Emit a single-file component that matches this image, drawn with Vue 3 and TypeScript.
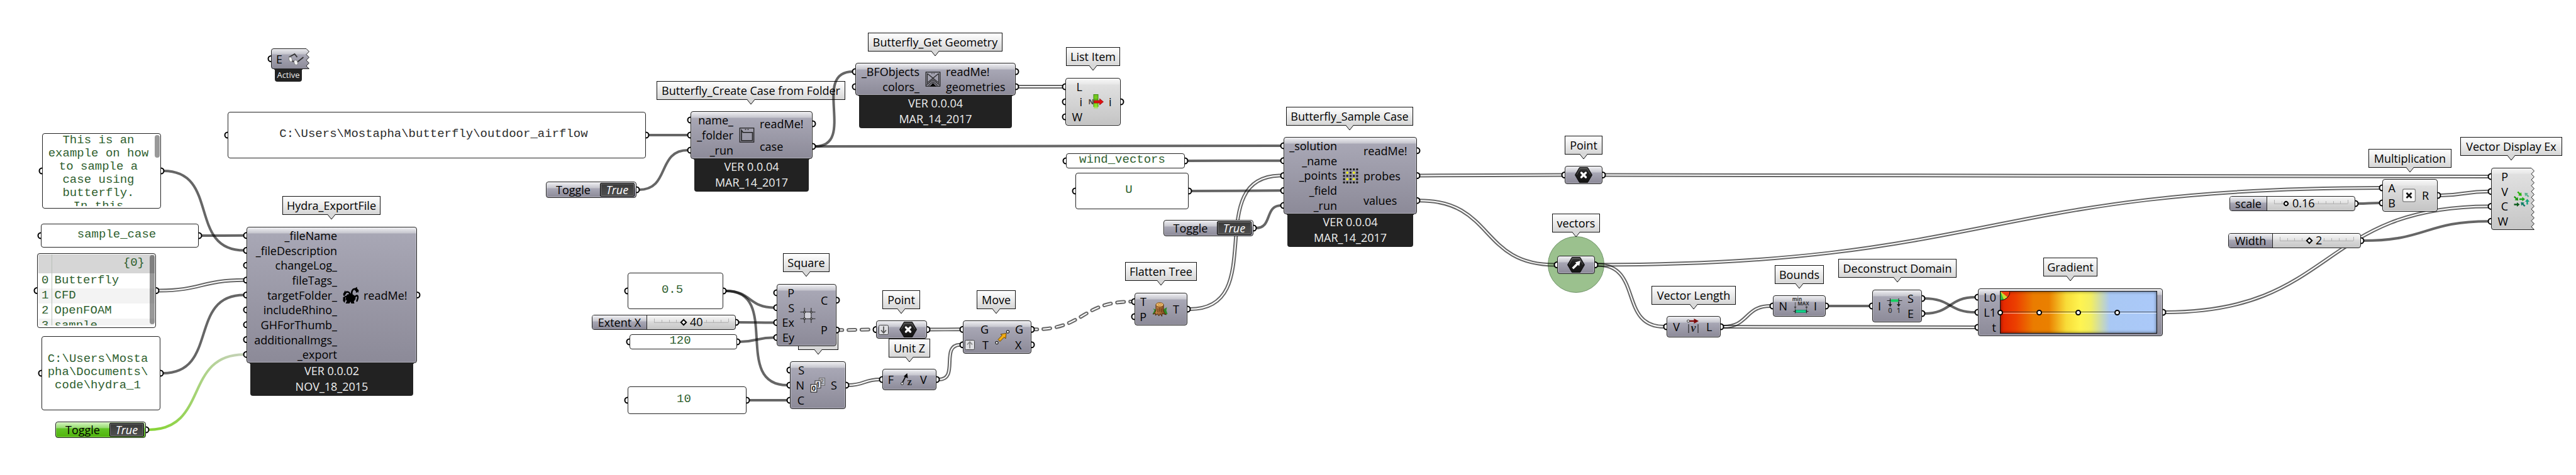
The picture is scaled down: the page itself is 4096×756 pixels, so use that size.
<script setup lang="ts">
import { computed, reactive } from 'vue'

interface Port { text: string; badge?: 'up' | 'down' }
interface Box { id: string; x: number; y: number; w: number; h: number }
interface Component extends Box {
  tone: 'grey' | 'light'
  ins: Port[]
  outs: Port[]
  inW: number
  icon: string
  wide?: boolean
  badge?: 'up' | 'down'
  tag?: string[]
  smallTag?: boolean
  jagged?: boolean
}
interface Panel extends Box { text: string; dark?: boolean; top?: boolean }
interface Toggle extends Box { on: boolean; green?: boolean }
interface Slider extends Box {
  name: string; nameW: number
  min: number; max: number; step: number; value: number; round?: boolean
}
interface Callout { text: string; cx: number; y: number; w: number }
type WireKind = 'item' | 'list' | 'tree' | 'picked'
interface Wire { from: string; out: number; to: string; inp: number; kind: WireKind }

const ports = (...names: string[]): Port[] => names.map((text) => ({ text }))

const components: Component[] = [
  { id: 'hydra', x: 392, y: 361, w: 271, h: 217, tone: 'grey', inW: 144, icon: 'hydra', tag: ['VER 0.0.02', 'NOV_18_2015'],
    ins: ports('_fileName', '_fileDescription', 'changeLog_', 'fileTags_', 'targetFolder_', 'includeRhino_', 'GHForThumb_', 'additionalImgs_', '_export'),
    outs: ports('readMe!') },
  { id: 'glasses', x: 431, y: 77, w: 61, h: 33, tone: 'grey', inW: 18, icon: 'glasses', jagged: true, ins: ports('E'), outs: [], tag: ['Active'], smallTag: true },
  { id: 'create', x: 1098, y: 177, w: 194, h: 76, tone: 'grey', inW: 68, icon: 'folder', tag: ['VER 0.0.04', 'MAR_14_2017'],
    ins: ports('name_', '_folder', '_run'), outs: ports('readMe!', 'case') },
  { id: 'getgeo', x: 1360, y: 100, w: 255, h: 52, tone: 'grey', inW: 102, icon: 'geometry', tag: ['VER 0.0.04', 'MAR_14_2017'],
    ins: ports('_BFObjects', 'colors_'), outs: ports('readMe!', 'geometries') },
  { id: 'listitem', x: 1694, y: 124, w: 88, h: 76, tone: 'light', inW: 27, icon: 'listitem', ins: ports('L', 'i', 'W'), outs: ports('i') },
  { id: 'sample', x: 2041, y: 218, w: 212, h: 123, tone: 'grey', inW: 85, icon: 'probes', tag: ['VER 0.0.04', 'MAR_14_2017'],
    ins: ports('_solution', '_name', '_points', '_field', '_run'), outs: ports('readMe!', 'probes', 'values') },
  { id: 'square', x: 1235, y: 452, w: 95, h: 99, tone: 'grey', inW: 28, icon: 'square', ins: ports('P', 'S', 'Ex', 'Ey'), outs: ports('C', 'P') },
  { id: 'series', x: 1256, y: 575, w: 89, h: 76, tone: 'grey', inW: 23, icon: 'series', ins: ports('S', 'N', 'C'), outs: ports('S') },
  { id: 'point1', x: 1393, y: 510, w: 81, h: 29, tone: 'grey', inW: 0, icon: 'point', wide: true, badge: 'down', ins: ports(''), outs: ports('') },
  { id: 'unitz', x: 1403, y: 587, w: 86, h: 34, tone: 'grey', inW: 18, icon: 'unitz', ins: ports('F'), outs: ports('V') },
  { id: 'move', x: 1531, y: 510, w: 109, h: 53, tone: 'grey', inW: 41, icon: 'move', ins: [{ text: 'G' }, { text: 'T', badge: 'up' }], outs: ports('G', 'X') },
  { id: 'flatten', x: 1804, y: 466, w: 84, h: 52, tone: 'grey', inW: 19, icon: 'stump', ins: ports('T', 'P'), outs: ports('T') },
  { id: 'point2', x: 2488, y: 264, w: 60, h: 29, tone: 'grey', inW: 0, icon: 'point', wide: true, ins: ports(''), outs: ports('') },
  { id: 'vectors', x: 2476, y: 407, w: 60, h: 29, tone: 'grey', inW: 0, icon: 'vector', wide: true, ins: ports(''), outs: ports('') },
  { id: 'vlen', x: 2650, y: 503, w: 86, h: 34, tone: 'grey', inW: 21, icon: 'vlen', ins: ports('V'), outs: ports('L') },
  { id: 'bounds', x: 2819, y: 470, w: 84, h: 34, tone: 'grey', inW: 23, icon: 'bounds', ins: ports('N'), outs: ports('I') },
  { id: 'decon', x: 2977, y: 461, w: 79, h: 52, tone: 'grey', inW: 14, icon: 'decon', ins: ports('I'), outs: ports('S', 'E') },
  { id: 'gradient', x: 3145, y: 459, w: 294, h: 76, tone: 'grey', inW: 29, icon: '', ins: ports('L0', 'L1', 't'), outs: ports('') },
  { id: 'mult', x: 3788, y: 285, w: 88, h: 52, tone: 'light', inW: 21, icon: 'times', ins: ports('A', 'B'), outs: ports('R') },
  { id: 'display', x: 3961, y: 267, w: 69, h: 99, tone: 'light', inW: 27, icon: 'display', jagged: true, ins: ports('P', 'V', 'C', 'W'), outs: [] },
]

const panels: Panel[] = [
  { id: 'about', x: 67, y: 212, w: 189, h: 120, top: true, text: 'This is an\nexample on how\nto sample a\ncase using\nbutterfly.\nIn this' },
  { id: 'casename', x: 65, y: 356, w: 251, h: 38, text: 'sample_case' },
  { id: 'target', x: 66, y: 535, w: 189, h: 118, text: 'C:\\Users\\Mosta\npha\\Documents\\\ncode\\hydra_1' },
  { id: 'casepath', x: 362, y: 178, w: 665, h: 74, dark: true, text: 'C:\\Users\\Mostapha\\butterfly\\outdoor_airflow' },
  { id: 'wind', x: 1695, y: 244, w: 189, h: 24, text: 'wind_vectors' },
  { id: 'field', x: 1710, y: 275, w: 180, h: 58, text: 'U' },
  { id: 'half', x: 998, y: 434, w: 152, h: 58, text: '0.5' },
  { id: 'extenty', x: 1001, y: 532, w: 171, h: 24, text: '120' },
  { id: 'count', x: 998, y: 615, w: 189, h: 44, text: '10' },
]

const tagList: Box = { id: 'tags', x: 59, y: 403, w: 189, h: 119 }
const tagRows = ['Butterfly', 'CFD', 'OpenFOAM', 'sample']

const toggles = reactive<Toggle[]>([
  { id: 'export', x: 88, y: 671, w: 144, h: 26, on: true, green: true },
  { id: 'runcreate', x: 868, y: 289, w: 144, h: 26, on: true },
  { id: 'runsample', x: 1850, y: 350, w: 143, h: 26, on: true },
])

const sliders = reactive<Slider[]>([
  { id: 'extentx', x: 941, y: 501, w: 229, h: 24, name: 'Extent X', nameW: 87, min: 0, max: 100, step: 1, value: 40 },
  { id: 'scale', x: 3545, y: 312, w: 200, h: 24, name: 'scale', nameW: 59, min: 0, max: 1, step: 0.01, value: 0.16, round: true },
  { id: 'width', x: 3543, y: 371, w: 211, h: 24, name: 'Width', nameW: 70, min: 0, max: 5, step: 1, value: 2 },
])

const callouts: Callout[] = [
  { text: 'Hydra_ExportFile', cx: 527, y: 312, w: 156 },
  { text: 'Butterfly_Create Case from Folder', cx: 1194, y: 129, w: 300 },
  { text: 'Butterfly_Get Geometry', cx: 1487, y: 52, w: 214 },
  { text: 'List Item', cx: 1738, y: 75, w: 86 },
  { text: 'Butterfly_Sample Case', cx: 2146, y: 170, w: 202 },
  { text: 'Square', cx: 1282, y: 403, w: 74 },
  { text: '', cx: 1301, y: 527, w: 64 },
  { text: 'Point', cx: 1433, y: 462, w: 60 },
  { text: 'Unit Z', cx: 1446, y: 539, w: 66 },
  { text: 'Move', cx: 1584, y: 462, w: 62 },
  { text: 'Flatten Tree', cx: 1846, y: 417, w: 114 },
  { text: 'Point', cx: 2518, y: 216, w: 60 },
  { text: 'vectors', cx: 2506, y: 340, w: 76 },
  { text: 'Vector Length', cx: 2693, y: 455, w: 134 },
  { text: 'Bounds', cx: 2861, y: 422, w: 78 },
  { text: 'Deconstruct Domain', cx: 3017, y: 412, w: 188 },
  { text: 'Gradient', cx: 3292, y: 410, w: 86 },
  { text: 'Multiplication', cx: 3832, y: 237, w: 132 },
  { text: 'Vector Display Ex', cx: 3993, y: 218, w: 162 },
]

const wires: Wire[] = [
  { from: 'about', out: 0, to: 'hydra', inp: 1, kind: 'item' },
  { from: 'casename', out: 0, to: 'hydra', inp: 0, kind: 'item' },
  { from: 'tags', out: 0, to: 'hydra', inp: 3, kind: 'list' },
  { from: 'target', out: 0, to: 'hydra', inp: 4, kind: 'item' },
  { from: 'export', out: 0, to: 'hydra', inp: 8, kind: 'picked' },
  { from: 'casepath', out: 0, to: 'create', inp: 1, kind: 'item' },
  { from: 'runcreate', out: 0, to: 'create', inp: 2, kind: 'item' },
  { from: 'create', out: 1, to: 'getgeo', inp: 0, kind: 'item' },
  { from: 'create', out: 1, to: 'sample', inp: 0, kind: 'item' },
  { from: 'getgeo', out: 1, to: 'listitem', inp: 0, kind: 'list' },
  { from: 'wind', out: 0, to: 'sample', inp: 1, kind: 'item' },
  { from: 'field', out: 0, to: 'sample', inp: 3, kind: 'item' },
  { from: 'runsample', out: 0, to: 'sample', inp: 4, kind: 'item' },
  { from: 'flatten', out: 0, to: 'sample', inp: 2, kind: 'list' },
  { from: 'half', out: 0, to: 'square', inp: 1, kind: 'item' },
  { from: 'half', out: 0, to: 'series', inp: 1, kind: 'item' },
  { from: 'extentx', out: 0, to: 'square', inp: 2, kind: 'item' },
  { from: 'extenty', out: 0, to: 'square', inp: 3, kind: 'item' },
  { from: 'count', out: 0, to: 'series', inp: 2, kind: 'item' },
  { from: 'square', out: 1, to: 'point1', inp: 0, kind: 'tree' },
  { from: 'point1', out: 0, to: 'move', inp: 0, kind: 'list' },
  { from: 'series', out: 0, to: 'unitz', inp: 0, kind: 'list' },
  { from: 'unitz', out: 0, to: 'move', inp: 1, kind: 'list' },
  { from: 'move', out: 0, to: 'flatten', inp: 0, kind: 'tree' },
  { from: 'sample', out: 1, to: 'point2', inp: 0, kind: 'list' },
  { from: 'sample', out: 2, to: 'vectors', inp: 0, kind: 'list' },
  { from: 'point2', out: 0, to: 'display', inp: 0, kind: 'list' },
  { from: 'vectors', out: 0, to: 'mult', inp: 0, kind: 'list' },
  { from: 'vectors', out: 0, to: 'vlen', inp: 0, kind: 'list' },
  { from: 'vlen', out: 0, to: 'bounds', inp: 0, kind: 'list' },
  { from: 'vlen', out: 0, to: 'gradient', inp: 2, kind: 'list' },
  { from: 'bounds', out: 0, to: 'decon', inp: 0, kind: 'item' },
  { from: 'decon', out: 0, to: 'gradient', inp: 1, kind: 'item' },
  { from: 'decon', out: 1, to: 'gradient', inp: 0, kind: 'item' },
  { from: 'gradient', out: 0, to: 'display', inp: 2, kind: 'list' },
  { from: 'scale', out: 0, to: 'mult', inp: 1, kind: 'item' },
  { from: 'width', out: 0, to: 'display', inp: 3, kind: 'item' },
  { from: 'mult', out: 0, to: 'display', inp: 1, kind: 'list' },
]

interface Anchored { box: Box; ins: number; outs: number }
const anchored = new Map<string, Anchored>()
components.forEach((c) => anchored.set(c.id, { box: c, ins: c.ins.length, outs: c.outs.length }))
panels.forEach((p) => anchored.set(p.id, { box: p, ins: 1, outs: 1 }))
anchored.set('tags', { box: tagList, ins: 1, outs: 1 })
toggles.forEach((t) => anchored.set(t.id, { box: t, ins: 0, outs: 1 }))
sliders.forEach((s) => anchored.set(s.id, { box: s, ins: 0, outs: 1 }))

const portY = (b: Box, i: number, n: number) => b.y + 2 + ((b.h - 4) * (i + 0.5)) / n

const grips = computed(() => {
  const list: { x: number; y: number }[] = []
  anchored.forEach(({ box, ins, outs }) => {
    for (let i = 0; i < ins; i++) list.push({ x: box.x, y: portY(box, i, ins) })
    for (let i = 0; i < outs; i++) list.push({ x: box.x + box.w, y: portY(box, i, outs) })
  })
  return list
})

const GRIP = 4
const drawn = computed(() =>
  wires.map((w, i) => {
    const a = anchored.get(w.from)!
    const b = anchored.get(w.to)!
    const x1 = a.box.x + a.box.w + GRIP
    const y1 = portY(a.box, w.out, a.outs)
    const x2 = b.box.x - GRIP
    const y2 = portY(b.box, w.inp, b.ins)
    const k = Math.hypot(x2 - x1, y2 - y1) / 2
    return { id: i, kind: w.kind, d: `M${x1} ${y1} C${x1 + k} ${y1} ${x2 - k} ${y2} ${x2} ${y2}` }
  }),
)

const place = (b: Box) => ({ left: `${b.x}px`, top: `${b.y}px`, width: `${b.w}px`, height: `${b.h}px` })
const columns = (c: Component) => ({
  gridTemplateColumns: c.wide ? '1fr' : c.icon ? `${c.inW - 1}px 42px 1fr` : `${c.inW - 1}px 1fr`,
})

function jaggedPath(w: number, h: number): string {
  const n = h > 60 ? 21 : 7
  let d = `M4 .5 H${w - 5}`
  for (let i = 1; i <= n; i++) d += ` L${i % 2 ? w - 0.5 : w - 5} ${0.5 + ((h - 1) * i) / n}`
  return `${d} H4 Q.5 ${h - 0.5} .5 ${h - 4} V4 Q.5 .5 4 .5 Z`
}

const railW = (s: Slider) => s.w - s.nameW - 24
const knobX = (s: Slider) => Math.round((railW(s) * (s.value - s.min)) / (s.max - s.min))
const textEnd = (s: Slider) => knobX(s) + 12 + String(s.value).replace('.', '').length * 10
function railPath(s: Slider): string {
  const w = railW(s)
  let d = `M0 8.5 H${knobX(s) - 4} M${Math.min(textEnd(s), w)} 8.5 H${w}`
  for (let i = 0; i <= 10; i++) {
    const x = Math.round((w * i) / 10)
    if (x > knobX(s) - 4 && x < textEnd(s)) continue
    d += ` M${x + 0.5} 8 v${i % 10 ? -4 : -6}`
  }
  return d
}

const grid5 = [0, 1, 2, 3, 4]
const isLit = (r: number, c: number) => r % 2 === 1 && c % 2 === 1

const fieldArrows = [
  { x: 9, y: 3.5, turn: 45, fill: '#22b400' },
  { x: 20, y: 5, turn: -135, fill: '#5cb48c' },
  { x: 3.5, y: 11, turn: 45, fill: '#1d9a10' },
  { x: 13, y: 12, turn: 0, fill: '#18a818' },
  { x: 21, y: 16, turn: -90, fill: '#12a07c' },
  { x: 4.5, y: 20.5, turn: 0, fill: '#0c5c1c' },
  { x: 14, y: 20, turn: -135, fill: '#0c7c64' },
]
</script>

<template>
  <main class="canvas">
    <svg class="defs" width="0" height="0" aria-hidden="true">
      <defs>
        <linearGradient id="hexfill" x1="0" y1="0" x2="0" y2="1">
          <stop offset="0" stop-color="#4a4a4a" /><stop offset=".3" stop-color="#202020" /><stop offset="1" stop-color="#141414" />
        </linearGradient>
        <linearGradient id="barfade" x1="0" y1="0" x2="0" y2="1">
          <stop offset="0" stop-color="#6fc21c" /><stop offset=".8" stop-color="#8ce424" /><stop offset="1" stop-color="#8ce424" stop-opacity="0" />
        </linearGradient>
        <linearGradient id="bark" x1="0" y1="0" x2="1" y2="0">
          <stop offset="0" stop-color="#d09050" /><stop offset="1" stop-color="#7a4418" />
        </linearGradient>
        <linearGradient id="arrowfill" x1="0" y1="0" x2="1" y2="1">
          <stop offset="0" stop-color="#ffc928" /><stop offset="1" stop-color="#e89000" />
        </linearGradient>
      </defs>
    </svg>

    <div class="group" aria-hidden="true"></div>

    <div v-for="(c, i) in callouts" :key="'c' + i" class="callout" :style="{ left: `${c.cx - c.w / 2}px`, top: `${c.y}px`, width: `${c.w}px` }">
      {{ c.text }}
      <svg class="tip" width="12" height="9" viewBox="0 0 12 9" aria-hidden="true"><path d="M0 0 L6 8 L12 0Z" fill="#d9d9d9" /><path d="M0 .5 L6 8 L12 .5" fill="none" stroke="#111" /></svg>
    </div>

    <svg class="wires" width="100%" height="100%" aria-hidden="true">
      <defs>
        <linearGradient id="picked" gradientUnits="userSpaceOnUse" x1="235" y1="684" x2="390" y2="564">
          <stop offset="0" stop-color="#86d433" /><stop offset="1" stop-color="#c6d2ba" />
        </linearGradient>
        <template v-for="w in drawn" :key="w.id">
          <mask v-if="w.kind === 'list' || w.kind === 'tree'" :id="'m' + w.id" maskUnits="userSpaceOnUse" x="0" y="0" width="100%" height="100%">
            <path :d="w.d" class="outer" :class="w.kind" /><path :d="w.d" class="inner" :class="w.kind" />
          </mask>
        </template>
      </defs>
      <template v-for="w in drawn" :key="w.id">
        <rect v-if="w.kind === 'list' || w.kind === 'tree'" width="100%" height="100%" fill="#000" fill-opacity=".6" :mask="`url(#m${w.id})`" />
        <path v-else :d="w.d" class="single" :class="w.kind" />
      </template>
      <circle v-for="(g, i) in grips" :key="'g' + i" :cx="g.x" :cy="g.y" r="4.5" fill="#fff" stroke="#000" stroke-width="2" />
    </svg>

    <div v-for="p in panels" :key="p.id" class="panel" :class="{ dark: p.dark, top: p.top }" :style="place(p)">
      <p>{{ p.text }}</p>
      <i v-if="p.top" class="thumb short"></i>
    </div>

    <div class="panel list" :style="place(tagList)">
      <div class="clip">
        <table>
          <thead><tr><th></th><th scope="col">{0}</th></tr></thead>
          <tbody>
            <tr v-for="(t, i) in tagRows" :key="t"><td class="index">{{ i }}</td><td>{{ t }}</td></tr>
          </tbody>
        </table>
      </div>
      <i class="thumb"></i>
    </div>

    <section v-for="c in components" :key="c.id" class="node" :style="place(c)">
      <div v-if="c.tag" class="tag" :class="{ small: c.smallTag }"><span v-for="t in c.tag" :key="t">{{ t }}</span></div>
      <svg v-if="c.jagged" class="jag" :width="c.w" :height="c.h" aria-hidden="true">
        <defs>
          <linearGradient :id="'jag-' + c.id" gradientUnits="userSpaceOnUse" x1="0" y1="0" x2="0" :y2="c.h">
            <stop offset="0" :stop-color="c.tone === 'grey' ? '#eeeef1' : '#f6f6f6'" />
            <stop :offset="9 / c.h" :stop-color="c.tone === 'grey' ? '#c6c6ce' : '#e8e8e8'" />
            <stop :offset="10 / c.h" :stop-color="c.tone === 'grey' ? '#a8a7b5' : '#e0e0e0'" />
            <stop offset="1" :stop-color="c.tone === 'grey' ? '#8c8a98' : '#c6c6c6'" />
          </linearGradient>
        </defs>
        <path :d="jaggedPath(c.w, c.h)" :fill="`url(#jag-${c.id})`" stroke="#222" />
      </svg>
      <div class="body" :class="[c.jagged ? 'bare' : c.tone, { badged: c.badge }]" :style="columns(c)">
        <svg v-if="c.badge" class="badge" width="16" height="16" viewBox="0 0 16 16" aria-hidden="true">
          <rect x=".5" y=".5" width="15" height="15" rx="2" fill="#dedee2" stroke="#444" /><path d="M8 2.5 V12 M4 8.5 L8 13 L12 8.5" fill="none" stroke="#555" stroke-width="1.8" />
        </svg>
        <div v-if="!c.wide" class="ins">
          <span v-for="p in c.ins" :key="p.text" class="port">
            <svg v-if="p.badge" class="pin" width="16" height="16" viewBox="0 0 16 16" aria-hidden="true">
              <rect x=".5" y=".5" width="15" height="15" rx="2" fill="#dedee2" stroke="#444" /><path d="M8 13.5 V4 M4 7.5 L8 3 L12 7.5" fill="none" stroke="#888" stroke-width="1.8" />
            </svg>{{ p.text }}</span>
        </div>

        <svg v-if="c.icon" class="icon" :class="{ hex: c.wide }" :viewBox="c.wide ? '0 0 28 25' : '0 0 24 24'" aria-hidden="true">
          <g v-if="c.icon === 'hydra'">
            <g fill="none" stroke="#000" stroke-linecap="round" stroke-linejoin="round">
              <path stroke-width="2.6" d="M15 16 C12.5 10 13.5 4 17 2.2 C20 1 22.5 3 21.5 6.5" />
              <path stroke-width="2.6" d="M12 15 C12 10 10 6.5 6.5 6.5 C4 6.5 3.5 9 2 11.5" />
              <path stroke-width="2.2" d="M8 15 C5 13 2 14 2 17 L1.2 21" />
              <path stroke-width="2.4" d="M17 20 C18 15 20 12 22.5 12.5 C25 14.5 23 17.5 22 21" />
            </g>
            <path d="M19 1 L22 -1.5 L22.5 1.5 L25 4 L24 8 L22 5 L19 5Z M3.5 4 L4.5 9 L1 13 L0 10Z M0 15 L3 14 L4 20 L2 24 L0 20Z M6 11 L13 9 L19 13 L20 18 L17 21 L18 25 L13 25 L12 22 L10 25 L4 25 L6 21 L4 18Z" />
          </g>
          <g v-else-if="c.icon === 'glasses'">
            <path d="M1 9 L10 4 L14 9 M5 15 L14 17 L24 9" fill="none" stroke="#333" stroke-width="1.8" />
            <ellipse cx="3.5" cy="12.5" rx="2.5" ry="4" transform="rotate(-18 3.5 12.5)" fill="#f4f4f4" stroke="#777" stroke-width=".8" />
            <ellipse cx="12" cy="17.5" rx="2.8" ry="4" transform="rotate(-18 12 17.5)" fill="#f4f4f4" stroke="#777" stroke-width=".8" />
          </g>
          <g v-else-if="c.icon === 'folder'" fill="none" stroke="#222">
            <rect x=".8" y=".8" width="22.4" height="22.4" stroke-width="1.3" />
            <path d="M3.5 4.5 L6 7.8 H21 V20.8 H3.5Z" stroke-width="1.6" />
            <path d="M9 3.2 h2 M13 3.2 h2" stroke-width="1.2" />
          </g>
          <g v-else-if="c.icon === 'geometry'">
            <rect x=".8" y=".8" width="22.4" height="22.4" fill="none" stroke="#222" stroke-width="1.3" />
            <path d="M3 3 V19 M21 3 V19 M3 3 L20 17 M21 3 L4 17 M2 21 L12 13 L22 21 M5 22 L12 16 L19 22" fill="none" stroke="#222" stroke-width="1.1" />
            <path d="M12 18 L17 23.5 H7Z" />
            <path d="M9.5 3 h1.6 M13 3 h1.6" stroke="#222" />
          </g>
          <g v-else-if="c.icon === 'listitem'">
            <rect x="8.5" y="0" width="7" height="24" fill="url(#barfade)" />
            <path d="M8.5 0 V20 M15.5 0 V20 M8.5 .5 H15.5 M8.5 8 H15.5" stroke="#3f8a10" />
            <path d="M9 10 H18 V7 L24 12 L18 17 V14 H9Z" fill="#e01010" stroke="#8a0808" stroke-width=".7" />
            <text x="0" y="16" font-size="11" font-weight="700" fill="#444">N</text>
          </g>
          <g v-else-if="c.icon === 'probes'">
            <g v-for="r in grid5" :key="r">
              <rect v-for="k in grid5" :key="k" :x="k * 5.2" :y="r * 5.2" width="3.2" height="3.2" rx="1.2" :fill="isLit(r, k) ? '#f4f400' : '#1a1a1a'" />
            </g>
          </g>
          <g v-else-if="c.icon === 'square'">
            <rect x="7" y="7" width="10" height="10" fill="#d2d1d9" />
            <path d="M6.7 0 V24 M17.3 0 V24 M0 6.7 H24 M0 17.3 H24" stroke="#222" stroke-opacity=".75" stroke-width="1.3" />
            <g fill="#aaa" stroke="#111"><circle cx="6.7" cy="6.7" r="1.5" /><circle cx="17.3" cy="6.7" r="1.5" /><circle cx="6.7" cy="17.3" r="1.5" /><circle cx="17.3" cy="17.3" r="1.5" /></g>
          </g>
          <g v-else-if="c.icon === 'series'" font-size="11" font-weight="700" text-anchor="middle">
            <rect x="14" y=".7" width="9" height="11.6" fill="#c2c1c9" stroke="#666" /><text x="18.5" y="10" fill="#777">2</text>
            <rect x="7.5" y="5" width="9" height="11.6" fill="#e2e2e6" stroke="#333" /><text x="12" y="15" fill="#333">1</text>
            <rect x=".7" y="11" width="9.6" height="12" fill="#fff" stroke="#111" /><text x="5.5" y="21" fill="#111">0</text>
          </g>
          <g v-else-if="c.wide">
            <path d="M7.5 .5 H20.5 L27.5 12.5 L20.5 24.5 H7.5 L.5 12.5Z" fill="url(#hexfill)" stroke="#0a0a0a" />
            <path d="M3 12 L8.5 2.5 H19.5 L25 12" fill="none" stroke="#666" stroke-width=".8" />
            <path v-if="c.icon === 'point'" d="M10.5 9 L17.5 16 M17.5 9 L10.5 16" stroke="#fff" stroke-width="3.4" stroke-linecap="round" />
            <path v-else d="M7.5 17 L14.5 10 L12.5 8.5 L21 6 L19 14.5 L17.2 12.5 L10 19.5Z" fill="#fff" />
          </g>
          <g v-else-if="c.icon === 'unitz'">
            <path d="M4.5 17 L10 6" stroke="#111" stroke-width="1.8" /><path d="M12 2 L13 10 L6.5 7Z" />
            <circle cx="4" cy="18.5" r="1.9" fill="#fff" stroke="#111" />
            <text class="serif" x="12" y="21" font-size="17" font-weight="700" fill="#222">z</text>
          </g>
          <g v-else-if="c.icon === 'move'">
            <path d="M5.5 15.5 L12 8.5 L9.5 7 L18.5 5.5 L17.5 14 L15.2 11.8 L8.5 18.5Z" fill="url(#arrowfill)" stroke="#6a4400" />
            <circle cx="3.5" cy="20.5" r="2.1" fill="#fff" stroke="#222" stroke-width="1.2" /><circle cx="21" cy="3" r="2.1" fill="#fff" stroke="#222" stroke-width="1.2" />
          </g>
          <g v-else-if="c.icon === 'stump'">
            <path d="M0 20 L3 14 L1 11 L6 13 L8 20Z M24 20 L22 14 L23 9 L18 12 L16 20Z" fill="#2f8a28" />
            <path d="M5.5 5 V14 Q4.500 18 1 20 L5.5 19 L4.5 22 L8.5 19.5 L10 23 L12.5 19.500 L15 23.5 L15.5 19 L22 21 Q18 18 17.500 14 V5Z" fill="url(#bark)" stroke="#4a2808" />
            <ellipse cx="11.500" cy="5" rx="6" ry="3.4" fill="#f4c47c" stroke="#7a4a14" />
            <ellipse cx="11.500" cy="5" rx="3" ry="1.4" fill="none" stroke="#c08438" />
            <path d="M8.5 11 V17 M11.5 10 V16 M14.5 11 V17" stroke="#5a3210" />
          </g>
          <g v-else-if="c.icon === 'vlen'">
            <path d="M5 3 H14" stroke="#7c0808" stroke-width="2.4" /><path d="M13 -1 L20.5 3 L13 7Z" fill="#7c0808" />
            <circle cx="4" cy="3" r="1.9" fill="#fff" stroke="#222" />
            <path d="M4.5 8 V22 M19.5 8 V22" stroke="#333" stroke-width="1.3" />
            <text class="serif" x="12" y="20" font-size="18" font-weight="700" font-style="italic" text-anchor="middle" fill="#222">v</text>
          </g>
          <g v-else-if="c.icon === 'bounds'">
            <text x="6" y="4" font-size="8" font-weight="700" text-anchor="middle" fill="#333">min</text>
            <text x="16" y="11" font-size="8" font-weight="700" text-anchor="middle" fill="#333">MAX</text>
            <path d="M3 6 V14 M21 12 V15" stroke="#555" stroke-width="1.1" /><path d="M1 13 H5 L3 17Z M19 13 H23 L21 17Z" fill="#444" />
            <rect x="4" y="18.5" width="16" height="4" fill="#12cf86" stroke="#0a7a5a" stroke-width=".6" />
            <path d="M3 17.5 V23.5 M21 17.5 V23.5 M0 20.5 H3 M21 20.5 H24" stroke="#222" stroke-width="1.2" />
          </g>
          <g v-else-if="c.icon === 'decon'">
            <path d="M0 3.5 H24 M5 0 V7 M18.5 0 V7" stroke="#222" stroke-width="1.2" />
            <rect x="6" y="1.5" width="12" height="4" fill="#14d060" />
            <path d="M5 6 V10 M18.5 6 V10" stroke="#222" stroke-width="1.6" /><path d="M2 9 H8 L5 13.5Z M15.5 9 H21.5 L18.5 13.5Z" fill="#222" />
            <g font-size="11" text-anchor="middle" fill="#333" font-weight="600"><text x="5" y="23">0</text><text x="18.5" y="23">1</text></g>
          </g>
          <g v-else-if="c.icon === 'times'">
            <rect x="2" y="2" width="20" height="20" rx="2.5" fill="#f8f8f8" stroke="#888" stroke-width="1.4" />
            <path d="M8 8 L16 16 M16 8 L8 16" stroke="#111" stroke-width="2.6" />
          </g>
          <g v-else>
            <path v-for="a in fieldArrows" :key="a.x" d="M-4.5 -1.2 H0 V-3.5 L4.5 0 L0 3.5 V1.2 H-4.5Z" :fill="a.fill" :transform="`translate(${a.x} ${a.y}) rotate(${a.turn})`" />
          </g>
        </svg>

        <div v-if="c.icon && !c.wide && c.outs.length" class="outs"><span v-for="p in c.outs" :key="p.text" class="port">{{ p.text }}</span></div>
        <div v-if="!c.icon" class="ramp">
          <svg class="wheel" width="15" height="14" viewBox="0 0 15 14" aria-hidden="true">
            <path d="M0 0 H15 L0 14Z" fill="#f6a020" /><path d="M0 0 H15 A14 14 0 0 1 10 10Z" fill="#ee4010" /><path d="M0 0 L11 9 A14 14 0 0 1 5 13Z" fill="#c8dc30" /><path d="M0 0 L5 13 A14 14 0 0 1 0 14Z" fill="#30b840" /><path d="M15 0 A15 14 0 0 1 0 14" fill="none" stroke="#111" />
          </svg>
          <span class="stops"><i></i><i></i><i></i><i></i></span>
        </div>
      </div>
    </section>

    <div v-for="t in toggles" :key="t.id" class="toggle" :class="{ green: t.green }" :style="place(t)">
      <label :for="t.id">Toggle</label>
      <button :id="t.id" type="button" :aria-pressed="t.on" @click="t.on = !t.on">{{ t.on ? 'True' : 'False' }}</button>
    </div>

    <div v-for="s in sliders" :key="s.id" class="slider" :style="place(s)">
      <label :for="s.id" :style="{ width: `${s.nameW}px` }">{{ s.name }}</label>
      <div class="track">
        <div class="rail">
          <svg width="100%" height="12" aria-hidden="true"><path :d="railPath(s)" fill="none" stroke="#b2b2b2" /></svg>
          <input :id="s.id" v-model.number="s.value" type="range" :class="{ round: s.round }" :min="s.min" :max="s.max" :step="s.step" />
          <output :for="s.id" :style="{ left: `${knobX(s) + 10}px` }">{{ s.value }}</output>
        </div>
      </div>
    </div>
  </main>
</template>

<style>
body {
  background: #fff;
}
</style>

<style scoped>
.canvas {
  position: relative;
  height: 100vh;
  overflow: auto;
  font-family: "Open Sans", "Noto Sans", sans-serif;
  font-size: 18px;
  line-height: 22px;
  color: #000;
}
.canvas *,
.canvas *::before,
.canvas *::after {
  box-sizing: border-box;
}
.defs,
.wires {
  position: absolute;
  left: 0;
  top: 0;
}
.wires {
  overflow: visible;
  pointer-events: none;
}
.serif {
  font-family: "Liberation Serif", serif;
}
.group {
  position: absolute;
  left: 2461px;
  top: 376px;
  width: 90px;
  height: 90px;
  border: 1px solid #71946a;
  border-radius: 50%;
  background: #9bc18e;
}
.callout {
  position: absolute;
  display: flex;
  align-items: center;
  justify-content: center;
  height: 30px;
  border: 1px solid #111;
  background: linear-gradient(#fff, #d6d6d6);
  white-space: nowrap;
}
.tip {
  position: absolute;
  left: calc(50% - 6px);
  top: 28px;
}
.outer,
.inner,
.single {
  fill: none;
}
.outer {
  stroke: #fff;
  stroke-width: 6px;
}
.inner {
  stroke: #000;
  stroke-width: 2px;
}
.tree {
  stroke-dasharray: 11 10;
  stroke-dashoffset: 6px;
  stroke-linecap: round;
}
.single {
  stroke: rgba(0, 0, 0, 0.6);
  stroke-width: 4px;
}
.single.picked {
  stroke: url(#picked);
}
.panel {
  position: absolute;
  display: flex;
  align-items: center;
  justify-content: center;
  padding: 0 10px 3px 0;
  border: 1px solid #222;
  border-radius: 4px;
  background: #fff;
  color: #2f5f2f;
  font-family: "Liberation Mono", monospace;
  font-size: 19px;
  line-height: 21px;
}
.panel.dark {
  color: #2c2c2c;
}
.panel p {
  margin: 0;
  text-align: center;
  white-space: pre;
}
.panel.top {
  align-items: flex-start;
}
.panel.top p {
  height: 100%;
  overflow: hidden;
}
.thumb {
  position: absolute;
  right: 1px;
  top: 2px;
  width: 8px;
  height: 110px;
  border-radius: 4px;
  background: rgba(0, 0, 0, 0.4);
}
.thumb.short {
  height: 36px;
}
.panel.list {
  display: block;
  padding: 1px 1px 3px;
}
.clip {
  height: 100%;
  overflow: hidden;
}
.panel table {
  width: 100%;
  border-collapse: collapse;
}
.panel th {
  height: 30px;
  padding: 0 16px 4px 0;
  background: #d6d6d6;
  font-weight: 400;
  text-align: right;
}
.panel td {
  height: 24px;
  padding: 0 0 2px 4px;
}
.panel tr :first-child {
  width: 21px;
  padding-left: 0;
  padding-right: 4px;
  border-right: 1px solid #b8c0b8;
  text-align: right;
}
.panel tbody tr:nth-child(even) {
  background: #f3f3f3;
}
.node {
  position: absolute;
}
.body {
  position: relative;
  display: grid;
  width: 100%;
  height: 100%;
  padding: 1px 0;
  border: 1px solid #222;
  border-radius: 4px;
}
.body.bare {
  border-color: transparent;
}
.grey,
.toggle {
  background: linear-gradient(#f0f0f3, #c6c6ce 9px, #a8a7b5 10px, #8c8a98);
  box-shadow: inset 0 0 0 1px rgba(255, 255, 255, 0.3);
}
.light {
  background: linear-gradient(#f8f8f8, #e8e8e8 9px, #e0e0e0 10px, #c4c4c4);
  box-shadow: inset 0 0 0 1px rgba(255, 255, 255, 0.4);
}
.ins,
.outs {
  display: flex;
  flex-direction: column;
  min-width: 0;
}
.port {
  display: flex;
  flex: 1;
  align-items: center;
  min-height: 0;
  white-space: nowrap;
}
.ins .port {
  justify-content: flex-end;
}
.pin {
  margin: 0 auto 0 2px;
}
.badge {
  position: absolute;
  left: 3px;
  top: 6px;
}
.badged {
  padding-left: 20px;
}
.icon {
  width: 25px;
  height: 24px;
  place-self: center;
  overflow: visible;
}
.icon.hex {
  width: 28px;
  height: 25px;
}
.jag {
  position: absolute;
  left: 0;
  top: 0;
}
.tag {
  position: absolute;
  left: 6px;
  right: 6px;
  top: 100%;
  display: flex;
  flex-direction: column;
  align-items: center;
  height: 52px;
  border-radius: 0 0 4px 4px;
  background: #222;
  color: #eee;
  line-height: 25px;
}
.tag::before,
.tag::after {
  content: "";
  position: absolute;
  top: 0;
  left: -3px;
  width: 3px;
  height: 3px;
  background: radial-gradient(circle at 0 100%, transparent 3px, #222 3px);
}
.tag::after {
  left: auto;
  right: -3px;
  background: radial-gradient(circle at 100% 100%, transparent 3px, #222 3px);
}
.tag.small {
  right: 12px;
  height: 20px;
  font-size: 13px;
  line-height: 18px;
}
.ramp {
  position: relative;
  display: flex;
  align-items: center;
  margin: 2px 8px 2px 6px;
  border: 1px solid #111;
  background: linear-gradient(90deg, #e42400, #ec4000 10%, #ea7c00 21%, #ea8000 31%, #f8dc38 42%, #fff450 51%, #f2ee62 58%, #a9c8f4 70%, #abc9f9);
  box-shadow: inset 0 0 5px rgba(0, 0, 0, 0.6);
}
.ramp::before {
  content: "";
  width: 100%;
  height: 3px;
  border-top: 1px solid rgba(40, 40, 40, 0.7);
  border-bottom: 1px solid rgba(255, 255, 255, 0.6);
}
.wheel {
  position: absolute;
  left: 0;
  top: 0;
}
.stops {
  position: absolute;
  inset: 0 5px 0 -5px;
  display: grid;
  grid-template-columns: repeat(4, 1fr);
  align-items: center;
}
.stops i {
  width: 9px;
  height: 9px;
  border: 2px solid #000;
  border-radius: 50%;
  background: #fff;
}
.toggle {
  position: absolute;
  display: flex;
  align-items: stretch;
  padding: 1px 2px 1px 0;
  border: 1px solid #222;
  border-radius: 4px;
}
.toggle.green {
  background: linear-gradient(#d6f4c0, #96dc70 9px, #62c426 10px, #50b40c);
}
.toggle label {
  flex: 1;
  text-align: center;
}
.toggle button {
  width: 55px;
  padding: 0;
  border: 1px solid #000;
  border-radius: 2px;
  background: linear-gradient(#3a3a3a, #505050);
  box-shadow: inset 0 0 0 1px #777;
  color: #fff;
  font: italic 18px/20px "Open Sans", "Noto Sans", sans-serif;
}
.slider {
  position: absolute;
  display: flex;
  border: 1px solid #222;
  border-radius: 4px;
  background: linear-gradient(#f8f8f8, #e4e4e4 9px, #dadada 10px, #c6c6c6);
  overflow: hidden;
}
.slider label {
  flex: none;
  border-right: 1px solid #222;
  background: linear-gradient(#f0f0f3, #c6c6ce 9px, #a8a7b5 10px, #8c8a98);
  text-align: center;
}
.track {
  flex: 1;
  padding: 3px 11px 0;
}
.rail {
  position: relative;
}
.rail svg {
  display: block;
  overflow: visible;
}
.rail input {
  position: absolute;
  left: -4px;
  top: 4px;
  width: calc(100% + 8px);
  height: 8px;
  margin: 0;
  background: transparent;
  appearance: none;
}
.rail input::-webkit-slider-thumb {
  appearance: none;
  width: 8px;
  height: 8px;
  border: 2px solid #000;
  background: #fff;
  transform: rotate(45deg);
}
.rail input.round::-webkit-slider-thumb {
  border-radius: 50%;
}
.rail output {
  position: absolute;
  top: -4px;
  pointer-events: none;
}
</style>
